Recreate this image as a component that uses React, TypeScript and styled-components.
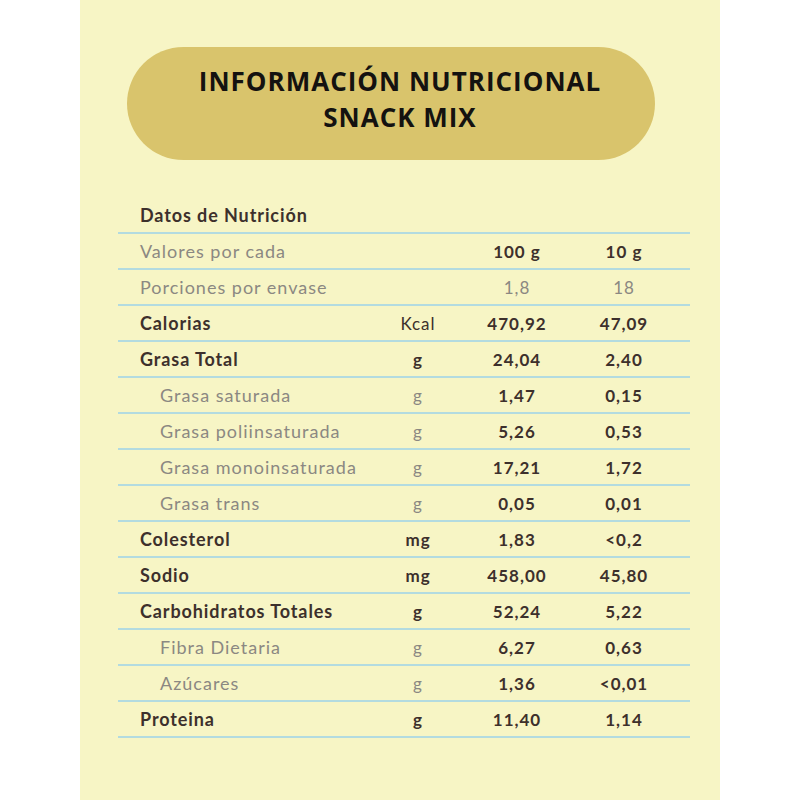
import styled, { createGlobalStyle } from "styled-components";

const GlobalStyle = createGlobalStyle`
  html, body {
    margin: 0;
    padding: 0;
    background: #ffffff;
  }
`;

const Page = styled.div`
  width: 800px;
  height: 800px;
  display: flex;
  justify-content: center;
  background: #ffffff;
`;

const Panel = styled.div`
  width: 640px;
  height: 800px;
  background: #f7f5c5;
  padding-top: 47px;
  box-sizing: border-box;
  display: flex;
  flex-direction: column;
`;

const TitlePill = styled.div`
  margin-left: 47px;
  width: 528px;
  height: 113px;
  border-radius: 57px;
  background: #d9c46c;
  box-sizing: border-box;
  padding: 0 0 9px 18px;
  display: flex;
  flex-direction: column;
  align-items: center;
  justify-content: center;
  font-family: "Open Sans", "Liberation Sans", sans-serif;
  font-weight: 700;
  font-size: 26px;
  letter-spacing: 1px;
  line-height: 36px;
  color: #141210;
  text-align: center;
`;

const Table = styled.div`
  margin: 38px 30px 0 38px;
  display: flex;
  flex-direction: column;
  font-family: "Lato", "Open Sans", sans-serif;
`;

const Row = styled.div`
  display: grid;
  grid-template-columns: 252px 96px 102px 1fr;
  height: 34px;
  align-items: center;
  border-bottom: 2px solid #b3dbe0;
`;

const Label = styled.div<{ $sub?: boolean; $light?: boolean }>`
  padding-left: ${(p) => (p.$sub ? "42px" : "22px")};
  font-size: 18px;
  letter-spacing: ${(p) => (p.$light ? "1px" : "0.9px")};
  white-space: nowrap;
  color: ${(p) => (p.$light ? "#8b8882" : "#3d302c")};
  font-weight: ${(p) => (p.$light ? 400 : 700)};
`;

const Cell = styled.div<{ $light?: boolean; $bold?: boolean; $end?: boolean }>`
  text-align: center;
  padding-right: ${(p) => (p.$end ? "10px" : "0")};
  font-size: 17px;
  letter-spacing: 1px;
  color: ${(p) => (p.$light ? "#8b8882" : "#3d302c")};
  font-weight: ${(p) => (p.$light ? 400 : p.$bold ? 700 : 400)};
`;

type Item = {
  label: string;
  unit: string;
  a: string;
  b: string;
  sub?: boolean;
};

const items: Item[] = [
  { label: "Calorias", unit: "Kcal", a: "470,92", b: "47,09" },
  { label: "Grasa Total", unit: "g", a: "24,04", b: "2,40" },
  { label: "Grasa saturada", unit: "g", a: "1,47", b: "0,15", sub: true },
  { label: "Grasa poliinsaturada", unit: "g", a: "5,26", b: "0,53", sub: true },
  { label: "Grasa monoinsaturada", unit: "g", a: "17,21", b: "1,72", sub: true },
  { label: "Grasa trans", unit: "g", a: "0,05", b: "0,01", sub: true },
  { label: "Colesterol", unit: "mg", a: "1,83", b: "<0,2" },
  { label: "Sodio", unit: "mg", a: "458,00", b: "45,80" },
  { label: "Carbohidratos Totales", unit: "g", a: "52,24", b: "5,22" },
  { label: "Fibra Dietaria", unit: "g", a: "6,27", b: "0,63", sub: true },
  { label: "Azúcares", unit: "g", a: "1,36", b: "<0,01", sub: true },
  { label: "Proteina", unit: "g", a: "11,40", b: "1,14" },
];

const App = (): JSX.Element => {
  return (
    <Page>
      <GlobalStyle />
      <Panel>
        <TitlePill>
          <div>INFORMACIÓN NUTRICIONAL</div>
          <div>SNACK MIX</div>
        </TitlePill>
        <Table>
          <Row>
            <Label>Datos de Nutrición</Label>
          </Row>
          <Row>
            <Label $light>Valores por cada</Label>
            <Cell />
            <Cell $bold>100 g</Cell>
            <Cell $bold $end>10 g</Cell>
          </Row>
          <Row>
            <Label $light>Porciones por envase</Label>
            <Cell />
            <Cell $light>1,8</Cell>
            <Cell $light $end>18</Cell>
          </Row>
          {items.map((it) => (
            <Row key={it.label}>
              <Label $sub={it.sub} $light={it.sub}>
                {it.label}
              </Label>
              <Cell $light={it.sub} $bold={it.unit !== "Kcal"}>
                {it.unit}
              </Cell>
              <Cell $bold>{it.a}</Cell>
              <Cell $bold $end>
                {it.b}
              </Cell>
            </Row>
          ))}
        </Table>
      </Panel>
    </Page>
  );
};

export default App;
